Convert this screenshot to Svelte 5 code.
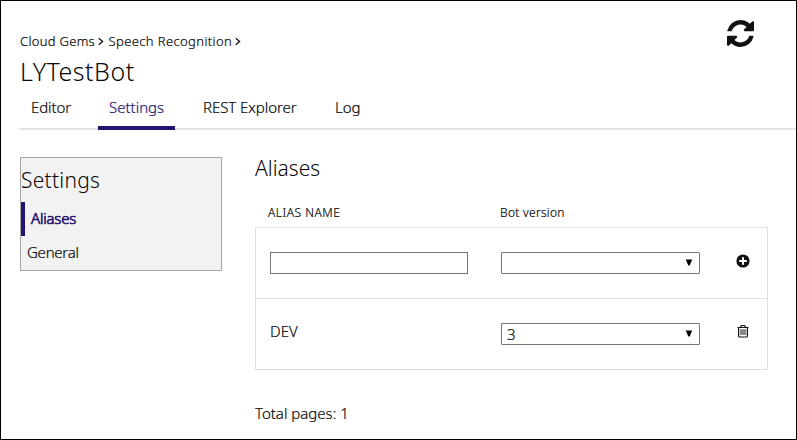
<script>
  const tabs = [
    { label: 'Editor', cls: 'editor' },
    { label: 'Settings', cls: 'settings' },
    { label: 'REST Explorer', cls: 'rest' },
    { label: 'Log', cls: 'log' }
  ];
  let active = $state('Settings');
</script>

<div class="page">
  <header>
    <div class="heading">
      <nav class="crumbs">
        <span class="c1">Cloud Gems</span>
        <svg width="6" height="9" viewBox="0 0 6 9"><path d="M.8 1.2 4.6 4.5.8 7.8" /></svg>
        <span class="c2">Speech Recognition</span>
        <svg width="6" height="9" viewBox="0 0 6 9"><path d="M.8 1.2 4.6 4.5.8 7.8" /></svg>
      </nav>
      <h1><span>LYTestBot</span></h1>
    </div>
    <button class="refresh" aria-label="Refresh">
      <svg width="27" height="27" viewBox="128 128 1536 1536"><path d="M1639 1056q0 5-1 7-64 268-268 434.5t-478 166.5q-146 0-282.5-55t-243.5-157l-129 129q-19 19-45 19t-45-19-19-45v-448q0-26 19-45t45-19h448q26 0 45 19t19 45-19 45l-137 137q71 66 161 102t187 36q134 0 250-65t186-179q11-17 53-117 8-23 30-23h192q13 0 22.5 9.5t9.5 22.5zm25-800v448q0 26-19 45t-45 19h-448q-26 0-45-19t-19-45 19-45l138-138q-148-137-349-137-134 0-250 65t-186 179q-11 17-53 117-8 23-30 23h-199q-13 0-22.5-9.5t-9.5-22.5v-7q65-268 270-434.5t480-166.5q146 0 284 55.5t245 156.5l130-129q19-19 45-19t45 19 19 45z" /></svg>
    </button>
  </header>

  <div class="tabs">
    {#each tabs as tab}
      <button class="tab {tab.cls}" class:active={active === tab.label} onclick={() => (active = tab.label)}><span>{tab.label}</span></button>
    {/each}
  </div>

  <div class="body">
    <aside>
      <h2><span>Settings</span></h2>
      <div class="item selected"><span>Aliases</span></div>
      <div class="item"><span>General</span></div>
    </aside>

    <main>
      <h2><span>Aliases</span></h2>
      <div class="cols">
        <div class="name"><span>ALIAS NAME</span></div>
        <div class="ver"><span>Bot version</span></div>
      </div>
      <div class="table">
        <div class="row">
          <div class="name"><input aria-label="Alias name" /></div>
          <div class="ver">
            <div class="select"><span></span><svg width="8" height="7" viewBox="0 0 8 7"><path d="M.8.4h6.4L4.7 6.6H3.3z" /></svg></div>
          </div>
          <svg class="plus" width="14" height="14" viewBox="0 0 14 14"><circle cx="7" cy="7" r="6.6" /><path d="M7 3.2v7.6M3.2 7h7.6" /></svg>
        </div>
        <div class="row">
          <div class="name dev"><span>DEV</span></div>
          <div class="ver">
            <div class="select"><span>3</span><svg width="8" height="7" viewBox="0 0 8 7"><path d="M.8.4h6.4L4.7 6.6H3.3z" /></svg></div>
          </div>
          <svg class="trash" width="12" height="14" viewBox="0 0 12 14"><path d="M.5 3.5h11M3.5 3.2l.8-1.7h3.4l.8 1.7M1.6 3.4v8.5q0 1.1 1 1.1h6.8q1 0 1-1.1V3.4" /><path class="bars" d="M4 5.2v5.8M6 5.2v5.8M8 5.2v5.8" /></svg>
        </div>
      </div>
      <div class="total"><span>Total pages: 1</span></div>
    </main>
  </div>
</div>

<style>
  :global(body) { margin: 0; background: #fff; }
  .page {
    box-sizing: border-box; width: 797px; height: 440px; border: 1px solid #000;
    padding-left: 19px; overflow: hidden; background: #fff; color: #080808;
    font: 300 15px/20px "Noto Sans", "Open Sans", sans-serif;
    -webkit-text-stroke: 0.2px currentColor;
  }
  button { border: 0; background: none; padding: 0; font: inherit; color: inherit; }
  span { white-space: nowrap; }
  header { display: flex; justify-content: space-between; height: 87px; }
  .heading { padding-top: 30px; }
  .crumbs { display: flex; align-items: center; height: 20px; font-size: 13px; letter-spacing: 0.38px; }
  .c1 { letter-spacing: 0.3px; }
  .crumbs svg { margin: 0 4.5px 0 3px; fill: none; stroke: #111; stroke-width: 1.3; }
  h1, h2 { margin: 0; font-weight: 300; -webkit-text-stroke-width: 0; }
  h1 { font-size: 25px; line-height: 40px; letter-spacing: 0.5px; }
  .refresh { width: 27px; height: 27px; margin: 19px 42px 0 0; }
  .refresh svg { display: block; fill: #111; }
  .tabs { display: flex; height: 42px; box-sizing: border-box; border-bottom: 2px solid #e2e2e2; }
  .tab { height: 42px; box-sizing: border-box; padding: 0 11px; text-align: left; border-bottom: 4px solid transparent; }
  .editor { width: 78px; letter-spacing: -0.1px; }
  .settings { width: 77px; }
  .rest { width: 132px; padding-left: 28px; letter-spacing: -0.05px; }
  .log { width: 60px; padding-left: 28px; }
  .tab.active { color: #26126f; border-bottom-color: #26126f; }
  .body { display: flex; padding-top: 27px; }
  aside { box-sizing: border-box; width: 202px; height: 114px; border: 1px solid #a6a6a6; background: #f2f2f2; }
  h2 { font-size: 21px; line-height: 22px; }
  aside h2 { height: 44px; padding-top: 11px; box-sizing: border-box; letter-spacing: 0.25px; }
  .item { height: 34px; line-height: 33px; padding-left: 6px; letter-spacing: -0.25px; }
  .item.selected { border-left: 4px solid #26126f; color: #26126f; letter-spacing: -0.2px; -webkit-text-stroke-width: 0.65px; }
  main { width: 513px; margin-left: 33px; }
  .cols { display: flex; height: 28px; margin-top: 20px; font-size: 12px; line-height: 27px; }
  .cols .name { width: 232px; padding-left: 13px; letter-spacing: 0.5px; }
  .cols .ver { letter-spacing: 0.3px; }
  .table { border: 1px solid #e0e0e0; }
  .row { display: flex; align-items: center; height: 70px; }
  .row + .row { border-top: 1px solid #e0e0e0; }
  .row .name { width: 231px; padding-left: 14px; }
  .row .dev { padding-bottom: 7px; }
  .row .ver { width: 235px; }
  input, .select { box-sizing: border-box; height: 22px; border: 1px solid #767676; background: #fff; }
  input { display: block; width: 198px; }
  .select { display: flex; align-items: center; justify-content: space-between; width: 199px; padding: 0 6px 0 5px; border-radius: 1px; }
  .select svg { fill: #000; margin-bottom: 1px; }
  .plus { fill: #111; margin-bottom: 5px; }
  .plus path { stroke: #fff; stroke-width: 2; }
  .trash { fill: none; stroke: #111; stroke-width: 1.2; margin: 0 0 6px 1px; }
  .trash .bars { stroke-width: 1; }
  .total { margin-top: 33px; }
</style>
